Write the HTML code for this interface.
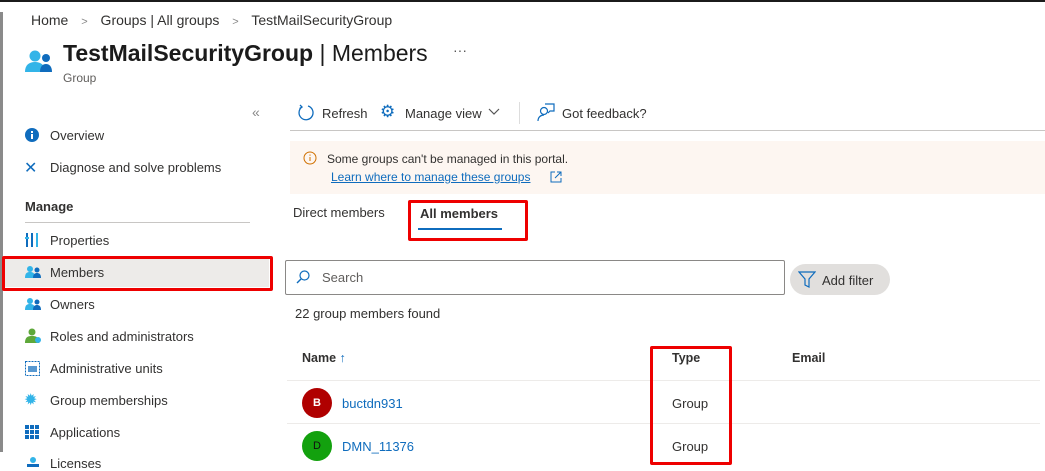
<!DOCTYPE html>
<html><head><meta charset="utf-8"><style>
*{margin:0;padding:0;box-sizing:border-box}
body{width:1045px;height:466px;overflow:hidden;background:#fff;font-family:"Liberation Sans",sans-serif;color:#323130;position:relative;font-size:13px}
.a{position:absolute;white-space:nowrap}
.lk{color:#0f6cbd}
.red{position:absolute;border:3px solid #e00;border-radius:2px}
.av{position:absolute;width:30px;height:30px;border-radius:50%;color:#fff;font-size:11px;font-weight:bold;text-align:center;line-height:30px}
.hl{position:absolute;height:1px;background:#edebe9}
</style></head><body>
<div class="a" style="left:0;top:0;width:1045px;height:2px;background:#1b1b1b"></div>
<div class="a" style="left:0;top:12px;width:3px;height:440px;background:#8a8a8a"></div>
<div class="a" style="left:31px;top:12px;font-size:14px;color:#323130">Home <span style="color:#888;margin:0 9px;font-size:11px">&gt;</span> Groups | All groups <span style="color:#888;margin:0 9px;font-size:11px">&gt;</span> TestMailSecurityGroup</div>
<svg class="a" style="left:24px;top:46px" width="30" height="28" viewBox="0 0 30 28"><circle cx="11" cy="10" r="5.5" fill="#32b4e8"/><path d="M1 26c0-7 4-10 10-10s10 3 10 10z" fill="#32b4e8"/><circle cx="22" cy="12" r="4" fill="#0f6cbd"/><path d="M16 26c0-6 3-8 6-8s6 2 6 8z" fill="#0f6cbd"/></svg>
<div class="a" style="left:63px;top:40px;font-size:23px;font-weight:bold;color:#1b1b1b">TestMailSecurityGroup <span style="font-weight:normal">| Members</span></div>
<div class="a" style="left:453px;top:42px;font-size:14px;color:#555">···</div>
<div class="a" style="left:63px;top:71px;font-size:12px;color:#605e5c">Group</div>
<div class="a" style="left:252px;top:104px;font-size:14px;color:#888">«</div>
<svg class="a" style="left:25px;top:128px" width="14" height="14"><circle cx="7" cy="7" r="7" fill="#0f6cbd"/><rect x="6" y="6" width="2" height="5" fill="#fff"/><rect x="6" y="3" width="2" height="2" fill="#fff"/></svg>
<div class="a" style="left:50px;top:128px">Overview</div>
<div class="a" style="left:24px;top:158px;font-size:16px;color:#0f6cbd">✕</div>
<div class="a" style="left:50px;top:160px">Diagnose and solve problems</div>
<div class="a" style="left:25px;top:199px;font-weight:bold">Manage</div>
<div class="a" style="left:25px;top:222px;width:225px;height:1px;background:#c8c6c4"></div>
<svg class="a" style="left:25px;top:233px" width="14" height="14"><rect x="1" y="0" width="2" height="14" fill="#0f6cbd"/><rect x="6" y="0" width="2" height="14" fill="#0f6cbd"/><rect x="11" y="0" width="2" height="14" fill="#32b4e8"/><rect x="0" y="4" width="4" height="2" fill="#32b4e8"/></svg>
<div class="a" style="left:50px;top:233px">Properties</div>
<div class="a" style="left:5px;top:259px;width:264px;height:28px;background:#edebe9"></div>
<div class="red" style="left:2px;top:256px;width:271px;height:35px"></div>
<svg class="a" style="left:25px;top:265px" width="16" height="13"><circle cx="5" cy="4" r="3" fill="#32b4e8"/><path d="M0 13c0-5 2-6 5-6s5 1 5 6z" fill="#32b4e8"/><circle cx="12" cy="5" r="2.5" fill="#0f6cbd"/><path d="M8 13c0-4 2-5 4-5s4 1 4 5z" fill="#0f6cbd"/></svg>
<div class="a" style="left:50px;top:265px">Members</div>
<svg class="a" style="left:25px;top:297px" width="16" height="13"><circle cx="5" cy="4" r="3" fill="#32b4e8"/><path d="M0 13c0-5 2-6 5-6s5 1 5 6z" fill="#32b4e8"/><circle cx="12" cy="5" r="2.5" fill="#0f6cbd"/><path d="M8 13c0-4 2-5 4-5s4 1 4 5z" fill="#0f6cbd"/></svg>
<div class="a" style="left:50px;top:297px">Owners</div>
<svg class="a" style="left:25px;top:328px" width="16" height="15"><circle cx="7" cy="4" r="3.5" fill="#5ea83a"/><path d="M0 15c0-6 3-7 7-7s7 1 7 7z" fill="#5ea83a"/><circle cx="13" cy="12" r="3" fill="#32b4e8"/></svg>
<div class="a" style="left:50px;top:329px">Roles and administrators</div>
<svg class="a" style="left:25px;top:361px" width="15" height="15"><rect x=".5" y=".5" width="14" height="14" fill="none" stroke="#0f6cbd" stroke-dasharray="2 1"/><rect x="3" y="5" width="9" height="6" fill="#0f6cbd" opacity=".7"/></svg>
<div class="a" style="left:50px;top:361px">Administrative units</div>
<div class="a" style="left:24px;top:390px;font-size:16px;color:#32b4e8">✹</div>
<div class="a" style="left:50px;top:393px">Group memberships</div>
<svg class="a" style="left:25px;top:425px" width="14" height="14"><g fill="#0f6cbd"><rect x="0" y="0" width="4" height="4"/><rect x="5" y="0" width="4" height="4"/><rect x="10" y="0" width="4" height="4"/><rect x="0" y="5" width="4" height="4"/><rect x="5" y="5" width="4" height="4"/><rect x="10" y="5" width="4" height="4"/><rect x="0" y="10" width="4" height="4"/><rect x="5" y="10" width="4" height="4"/><rect x="10" y="10" width="4" height="4"/></g></svg>
<div class="a" style="left:50px;top:425px">Applications</div>
<svg class="a" style="left:26px;top:457px" width="14" height="10"><circle cx="7" cy="3" r="3" fill="#32b4e8"/><rect x="1" y="7" width="12" height="3" fill="#0f6cbd"/></svg>
<div class="a" style="left:50px;top:456px">Licenses</div>
<svg class="a" style="left:297px;top:104px" width="18" height="18" viewBox="0 0 18 18"><path d="M5 3A7 7 0 1 0 11 2" fill="none" stroke="#0f6cbd" stroke-width="1.3"/><path d="M3 1l2 2-2.5 1.5" fill="none" stroke="#0f6cbd" stroke-width="1.3"/></svg>
<div class="a" style="left:322px;top:106px">Refresh</div>
<div class="a" style="left:380px;top:102px;font-size:17px;color:#0f6cbd">⚙</div>
<div class="a" style="left:405px;top:106px">Manage view</div>
<svg class="a" style="left:488px;top:108px" width="12" height="8"><path d="M1 1l5 5 5-5" fill="none" stroke="#555" stroke-width="1.2"/></svg>
<div class="a" style="left:519px;top:102px;width:1px;height:22px;background:#ddd"></div>
<svg class="a" style="left:537px;top:103px" width="18" height="18"><circle cx="7" cy="8" r="3.5" fill="none" stroke="#0f6cbd" stroke-width="1.2"/><path d="M1 18c0-4 3-6 6-6M8 1h9v7h-4l-2 2" fill="none" stroke="#0f6cbd" stroke-width="1.2"/></svg>
<div class="a" style="left:562px;top:106px">Got feedback?</div>
<div class="a" style="left:290px;top:130px;width:755px;height:1px;background:#c8c6c4"></div>
<div class="a" style="left:290px;top:141px;width:755px;height:53px;background:#fdf6f1"></div>
<svg class="a" style="left:303px;top:151px" width="14" height="14"><circle cx="7" cy="7" r="6" fill="none" stroke="#d07000" stroke-width="1"/><rect x="6.5" y="6" width="1" height="4" fill="#d07000"/><rect x="6.5" y="3.5" width="1" height="1.2" fill="#d07000"/></svg>
<div class="a" style="left:327px;top:152px;font-size:12px">Some groups can't be managed in this portal.</div>
<div class="a lk" style="left:331px;top:170px;font-size:12px;text-decoration:underline">Learn where to manage these groups</div>
<svg class="a" style="left:550px;top:171px" width="12" height="12"><path d="M5 1H1v10h10V7M7 1h4v4M11 1L5 7" fill="none" stroke="#0f6cbd" stroke-width="1"/></svg>
<div class="a" style="left:293px;top:205px">Direct members</div>
<div class="a" style="left:420px;top:206px;font-weight:bold">All members</div>
<div class="a" style="left:418px;top:228px;width:84px;height:2px;background:#0f6cbd"></div>
<div class="red" style="left:408px;top:200px;width:120px;height:41px"></div>
<div class="a" style="left:285px;top:260px;width:500px;height:35px;border:1px solid #8a8886;border-radius:2px"></div>
<svg class="a" style="left:296px;top:270px" width="14" height="14"><circle cx="8.5" cy="5.5" r="4.5" fill="none" stroke="#0f6cbd" stroke-width="1.2"/><path d="M5 9L1 13" stroke="#0f6cbd" stroke-width="1.4"/></svg>
<div class="a" style="left:322px;top:270px;color:#605e5c">Search</div>
<div class="a" style="left:790px;top:264px;width:100px;height:31px;border-radius:16px;background:#e1dfdd"></div>
<svg class="a" style="left:798px;top:271px" width="18" height="18"><path d="M1 1h16l-6 7v8l-4-2V8z" fill="none" stroke="#0f6cbd" stroke-width="1.2"/></svg>
<div class="a" style="left:822px;top:273px">Add filter</div>
<div class="a" style="left:295px;top:306px">22 group members found</div>
<div class="a" style="left:302px;top:351px;font-weight:bold;font-size:12.5px">Name <span style="color:#0f6cbd;font-weight:normal">↑</span></div>
<div class="a" style="left:672px;top:351px;font-weight:bold;font-size:12.5px">Type</div>
<div class="a" style="left:792px;top:351px;font-weight:bold;font-size:12.5px">Email</div>
<div class="hl" style="left:287px;top:380px;width:753px"></div>
<div class="hl" style="left:287px;top:423px;width:753px"></div>
<div class="av" style="left:302px;top:388px;background:#b00000">B</div>
<div class="a lk" style="left:342px;top:396px">buctdn931</div>
<div class="a" style="left:672px;top:396px">Group</div>
<div class="av" style="left:302px;top:431px;background:#13a10e;color:#111;font-weight:normal">D</div>
<div class="a lk" style="left:342px;top:439px">DMN_11376</div>
<div class="a" style="left:672px;top:439px">Group</div>
<div class="red" style="left:650px;top:346px;width:82px;height:119px"></div>
</body></html>
